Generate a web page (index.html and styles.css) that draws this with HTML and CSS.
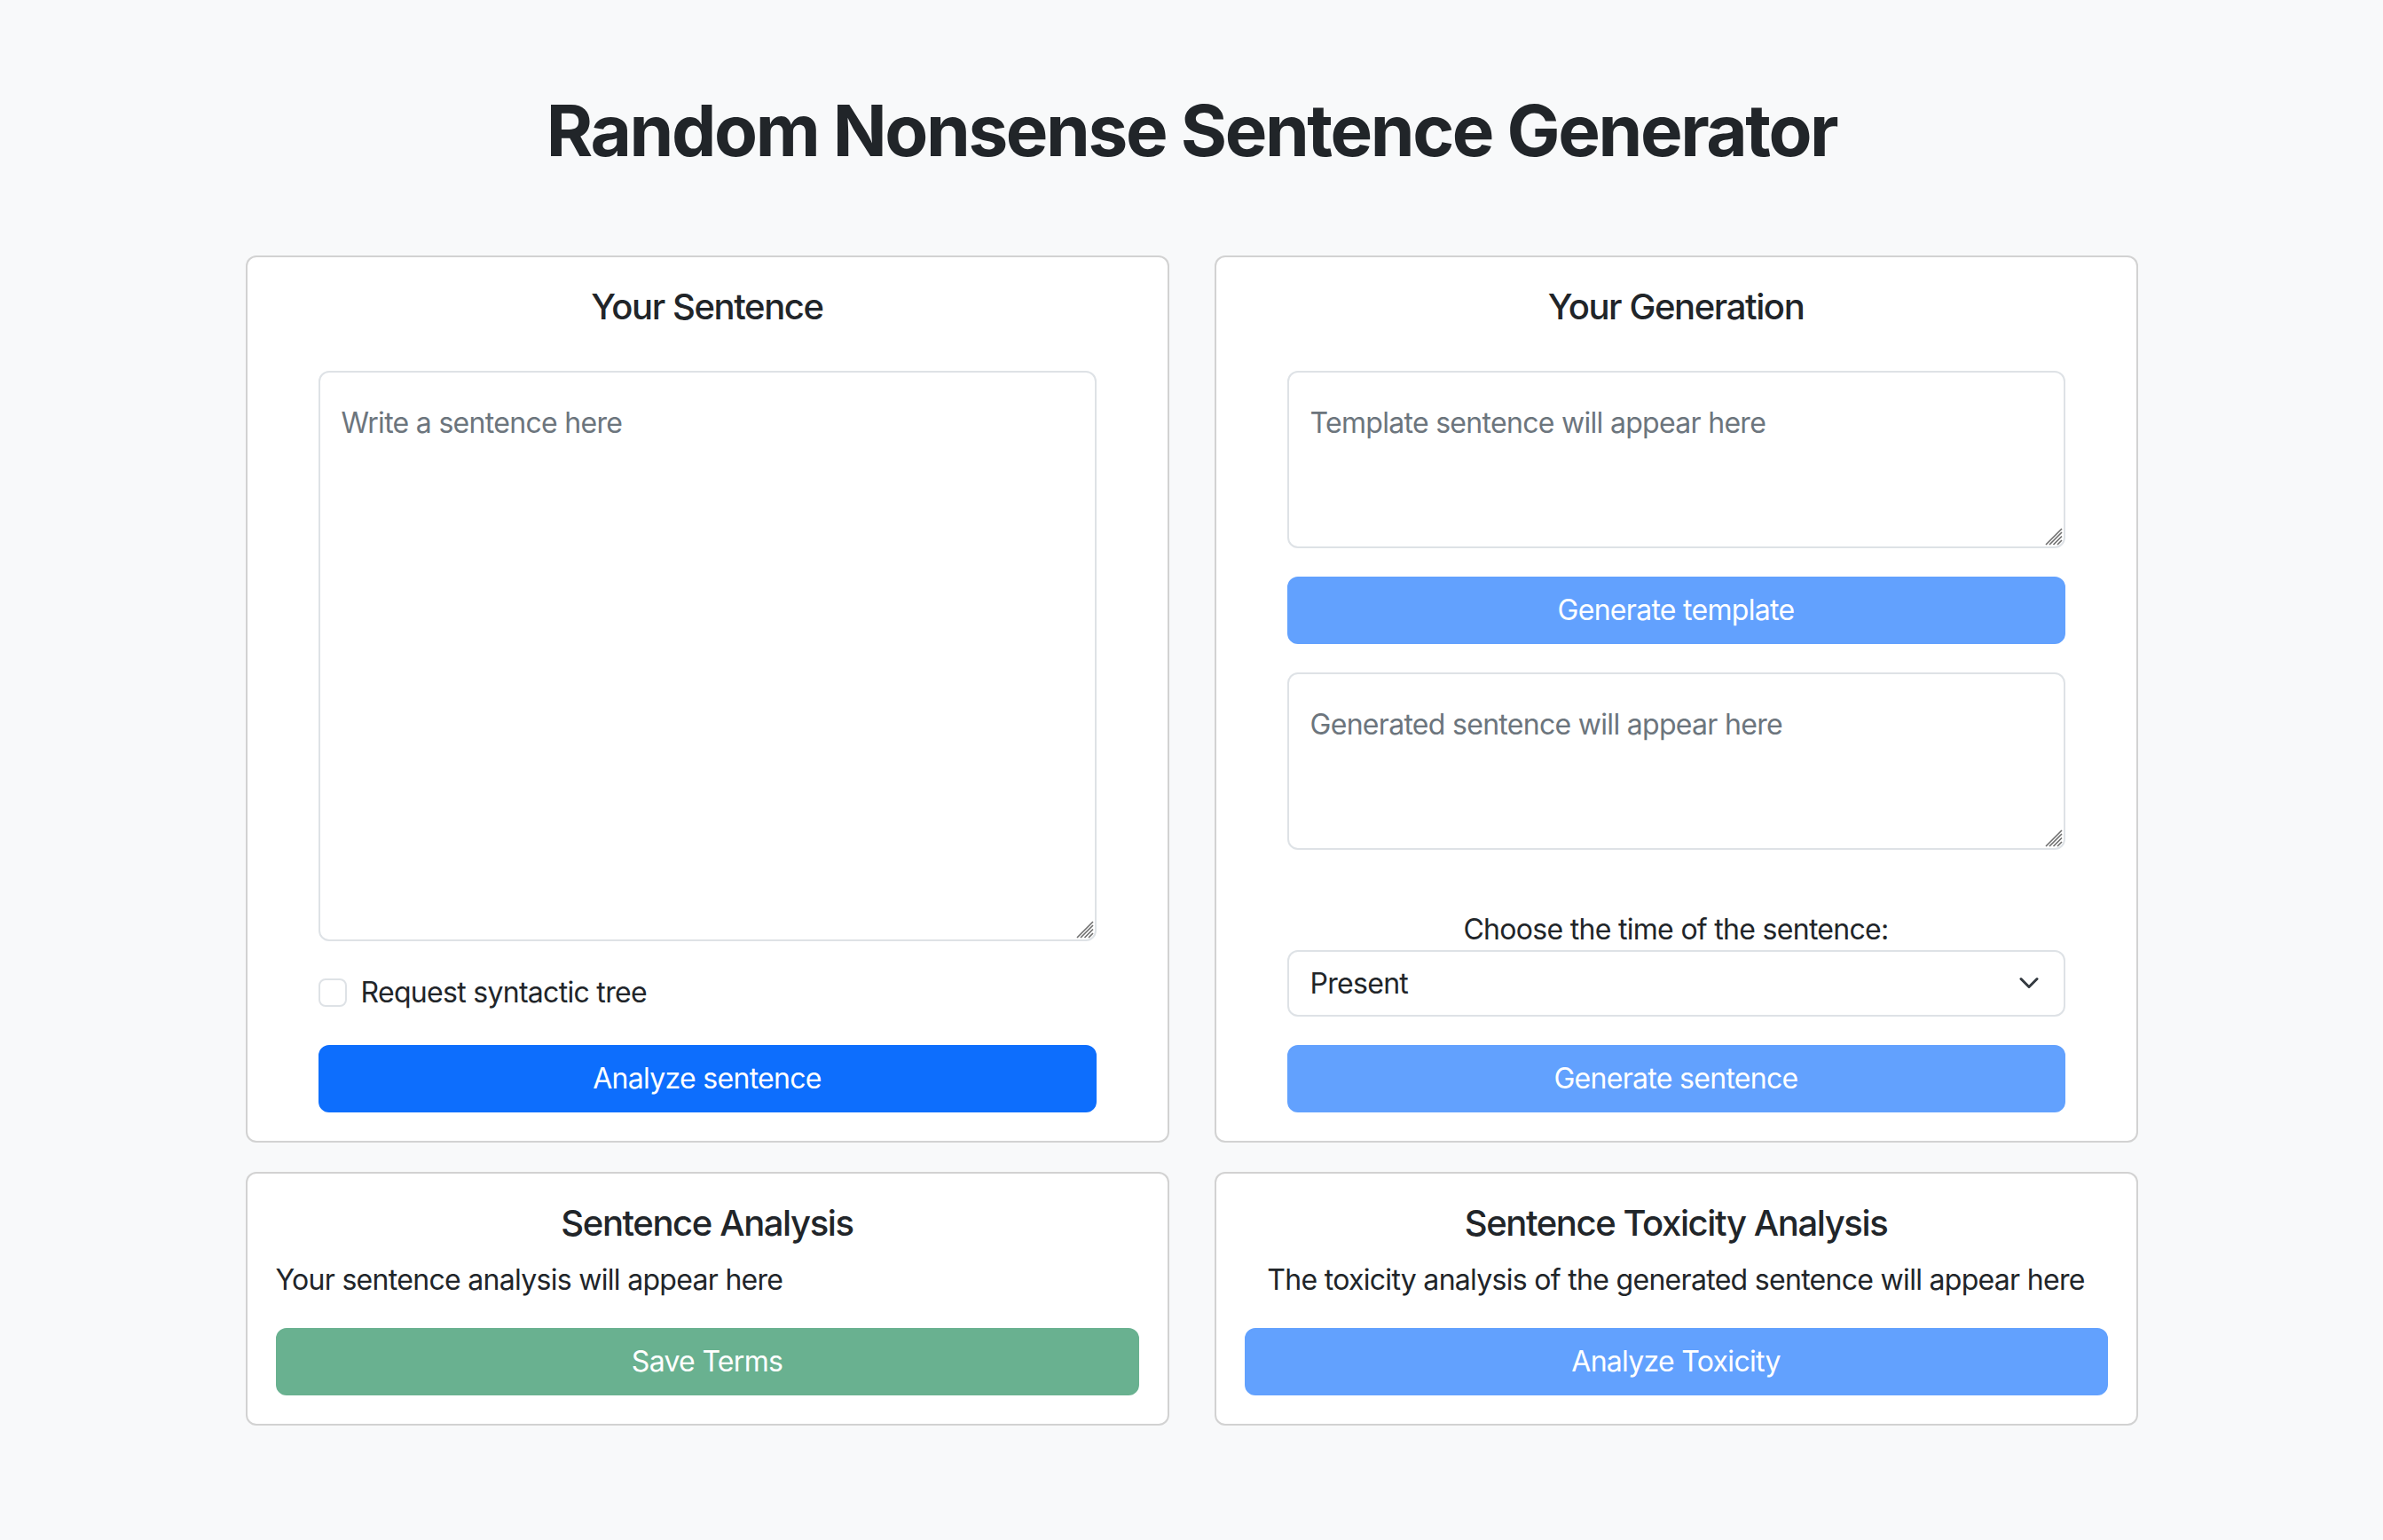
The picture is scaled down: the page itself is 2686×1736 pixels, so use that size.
FILE: index.html
```html
<!DOCTYPE html>
<html lang="en">
<head>
<meta charset="utf-8">
<title>Random Nonsense Sentence Generator</title>
<link rel="stylesheet" href="styles.css">
</head>
<body>
<div class="page">
  <h1 class="title">Random Nonsense Sentence Generator</h1>
  <div class="grid">
    <section class="card card-top">
      <h5 class="card-title">Your Sentence</h5>
      <div class="field-wrap field-wrap-big">
        <textarea class="field field-big" placeholder="Write a sentence here"></textarea>
        <svg class="grip" viewBox="0 0 20 20" aria-hidden="true"><path d="M19 5L5 19M19 9.5L9.5 19M19 14L14 19M19 1L1 19" fill="none" stroke="#6e6e6e" stroke-width="1.6"/></svg>
      </div>
      <div class="check">
        <input type="checkbox" class="check-input" id="tree">
        <label for="tree" class="check-label">Request syntactic tree</label>
      </div>
      <button class="btn btn-primary">Analyze sentence</button>
    </section>

    <section class="card card-top">
      <h5 class="card-title">Your Generation</h5>
      <div class="field-wrap field-wrap-small">
        <textarea class="field field-small" placeholder="Template sentence will appear here"></textarea>
        <svg class="grip" viewBox="0 0 20 20" aria-hidden="true"><path d="M19 5L5 19M19 9.5L9.5 19M19 14L14 19M19 1L1 19" fill="none" stroke="#6e6e6e" stroke-width="1.6"/></svg>
      </div>
      <button class="btn btn-light-primary btn-gap">Generate template</button>
      <div class="field-wrap field-wrap-gen">
        <textarea class="field field-small" placeholder="Generated sentence will appear here"></textarea>
        <svg class="grip" viewBox="0 0 20 20" aria-hidden="true"><path d="M19 5L5 19M19 9.5L9.5 19M19 14L14 19M19 1L1 19" fill="none" stroke="#6e6e6e" stroke-width="1.6"/></svg>
      </div>
      <label class="select-label" for="time">Choose the time of the sentence:</label>
      <div class="select-wrap">
        <select class="select" id="time">
          <option>Present</option>
          <option>Past</option>
          <option>Future</option>
        </select>
        <svg class="chevron" viewBox="0 0 16 16" width="24" height="24" aria-hidden="true"><path d="M2 5l6 6 6-6" fill="none" stroke="#343a40" stroke-width="2" stroke-linecap="round" stroke-linejoin="round"/></svg>
      </div>
      <button class="btn btn-light-primary">Generate sentence</button>
    </section>

    <section class="card card-bottom">
      <h5 class="card-title card-title-sm">Sentence Analysis</h5>
      <p class="card-text">Your sentence analysis will appear here</p>
      <button class="btn btn-light-success">Save Terms</button>
    </section>

    <section class="card card-bottom">
      <h5 class="card-title card-title-sm">Sentence Toxicity Analysis</h5>
      <p class="card-text card-text-center">The toxicity analysis of the generated sentence will appear here</p>
      <button class="btn btn-light-primary">Analyze Toxicity</button>
    </section>
  </div>
</div>
</body>
</html>
```

FILE: styles.css
```css
* {
  box-sizing: border-box;
}

html, body {
  margin: 0;
  padding: 0;
}

body {
  background: #f8f9fa;
  color: #212529;
  font-family: Inter, "Noto Sans", "Liberation Sans", sans-serif;
  font-size: 32px;
  line-height: 1.5;
  letter-spacing: -0.7px;
  min-height: 1736px;
}

.page {
  padding-top: 99px;
  padding-bottom: 80px;
}

.title {
  margin: 0 0 93px;
  font-size: 80px;
  font-weight: 700;
  line-height: 1.2;
  text-align: center;
  letter-spacing: -2.4px;
}

.grid {
  width: 2133px;
  margin: 0 auto;
  display: grid;
  grid-template-columns: 1041px 1041px;
  column-gap: 51px;
  row-gap: 33px;
}

.card {
  background: #fff;
  border: 2px solid rgba(0, 0, 0, 0.175);
  border-radius: 12px;
  display: flex;
  flex-direction: column;
}

.card-top {
  padding: 32px 80px;
}

.card-bottom {
  padding: 32px;
}

.card-title {
  margin: 0 0 48px;
  font-size: 40px;
  font-weight: 500;
  line-height: 1.2;
  text-align: center;
  letter-spacing: -1.4px;
}

.card-title-sm {
  margin-bottom: 16px;
}

.card-text {
  margin: 0 0 30px;
}

.card-text-center {
  text-align: center;
}

.field-wrap {
  position: relative;
}

.field-wrap-big {
  margin-bottom: 34px;
}

.field-wrap-small {
  margin-bottom: 32px;
}

.field-wrap-gen {
  margin-bottom: 67px;
}

.field {
  display: block;
  width: 100%;
  margin: 0;
  padding: 33px 24px 12px;
  font-family: inherit;
  font-size: 32px;
  line-height: 1.5;
  letter-spacing: -0.7px;
  color: #212529;
  background: #fff;
  border: 2px solid #dee2e6;
  border-radius: 12px;
  resize: none;
  outline: none;
}

.field::placeholder {
  color: #6c757d;
  opacity: 1;
}

.field-big {
  height: 643px;
}

.field-small {
  height: 200px;
}

.grip {
  position: absolute;
  right: 3px;
  bottom: 3px;
  width: 20px;
  height: 20px;
  pointer-events: none;
}

.check {
  min-height: 48px;
  padding-left: 48px;
  margin-bottom: 35px;
  display: flex;
  align-items: flex-start;
}

.check-input {
  appearance: none;
  -webkit-appearance: none;
  width: 32px;
  height: 32px;
  margin: 8px 0 0 -48px;
  border: 2px solid #dee2e6;
  border-radius: 8px;
  background: #fff;
  flex: none;
}

.check-label {
  margin-left: 16px;
  line-height: 48px;
}

.select-label {
  display: block;
  text-align: center;
  line-height: 46px;
}

.select-wrap {
  position: relative;
  margin-bottom: 32px;
}

.select {
  display: block;
  width: 100%;
  height: 75px;
  margin: 0;
  padding: 0 72px 0 24px;
  font-family: inherit;
  font-size: 32px;
  letter-spacing: -0.7px;
  color: #212529;
  background: #fff;
  border: 2px solid #dee2e6;
  border-radius: 12px;
  appearance: none;
  -webkit-appearance: none;
  outline: none;
}

.chevron {
  position: absolute;
  right: 29px;
  top: 50%;
  width: 24px;
  height: 24px;
  margin-top: -13px;
  pointer-events: none;
}

.btn {
  display: block;
  width: 100%;
  height: 76px;
  margin: 0;
  padding: 0 24px;
  font-family: inherit;
  font-size: 32px;
  line-height: 1.5;
  letter-spacing: -0.7px;
  color: #fff;
  border: 2px solid transparent;
  border-radius: 12px;
  text-align: center;
  cursor: pointer;
}

.btn-gap {
  margin-bottom: 32px;
}

.btn-primary {
  background: #0d6efd;
  border-color: #0d6efd;
}

.btn-light-primary {
  background: #62a1fe;
  border-color: #62a1fe;
}

.btn-light-success {
  background: #69b190;
  border-color: #69b190;
}
```
